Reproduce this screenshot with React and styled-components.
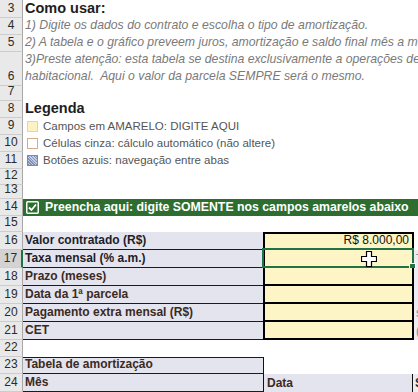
import React from "react";
import styled, { createGlobalStyle, css } from "styled-components";

const Global = createGlobalStyle`
  html, body { margin: 0; padding: 0; background: #fff; overflow: hidden; }
  body { width: 418px; height: 392px; font-family: "Liberation Sans", Arial, sans-serif; }
`;

const Sheet = styled.div`
  display: flex;
  flex-direction: column;
  width: 418px;
  height: 392px;
  overflow: hidden;
`;

const Row = styled.div`
  display: flex;
  height: ${(p) => p.$h}px;
  flex: 0 0 auto;
`;

const RowHead = styled.div`
  box-sizing: border-box;
  width: 23px;
  flex: 0 0 23px;
  display: flex;
  align-items: flex-end;
  justify-content: center;
  padding-bottom: 2px;
  font-size: 12px;
  line-height: 14px;
  color: #2b2b2b;
  background: ${(p) => (p.$active ? "#d3d3d3" : "#e9e9e9")};
  border-bottom: 1px solid #cdcdcd;
  border-right: ${(p) => (p.$active ? "2px solid #217346" : "1px solid #a8a8a8")};
`;

const Body = styled.div`
  flex: 1;
  display: flex;
  min-width: 0;
  position: relative;
  background: ${(p) => p.$bg || "#fff"};
`;

const FreeText = styled.div`
  align-self: flex-end;
  padding: 0 0 ${(p) => p.$pb ?? 1}px 2px;
  white-space: pre;
  ${(p) =>
    p.$kind === "title" &&
    css`
      font-size: 14.5px;
      font-weight: bold;
      color: #1e1e1e;
      line-height: 17px;
    `}
  ${(p) =>
    p.$kind === "note" &&
    css`
      font-size: 12.25px;
      font-style: italic;
      color: #7a7a7a;
      line-height: 17px;
    `}
  ${(p) =>
    p.$kind === "banner" &&
    css`
      font-size: 12.3px;
      font-weight: bold;
      color: #fff;
      line-height: 15px;
      display: flex;
      align-items: center;
      gap: 6px;
      padding-left: 3px;
    `}
`;

const LegendLine = styled.div`
  align-self: flex-end;
  display: flex;
  align-items: center;
  gap: 5px;
  padding: 0 0 2px 4px;
  font-size: 11.5px;
  line-height: 14px;
  color: #555;
  white-space: nowrap;
`;

const Swatch = styled.span`
  box-sizing: border-box;
  width: 11px;
  height: 11px;
  flex: 0 0 11px;
  ${(p) =>
    p.$type === "yellow" &&
    css`
      background: #fdf3c2;
      border: 1px solid #e2d79c;
    `}
  ${(p) =>
    p.$type === "gray" &&
    css`
      background: #fff;
      border: 1px solid #d4ad86;
    `}
  ${(p) =>
    p.$type === "blue" &&
    css`
      background: repeating-linear-gradient(45deg, #7f8fb8 0 1px, #c4cde2 1px 2px);
      border: 1px solid #7a88ad;
    `}
`;

const LabelCell = styled.div`
  box-sizing: border-box;
  width: 240px;
  flex: 0 0 240px;
  display: flex;
  align-items: flex-end;
  padding: 0 0 2px 2px;
  background: #e4e4ee;
  font-size: 12px;
  font-weight: bold;
  line-height: 14px;
  color: ${(p) => (p.$dark ? "#1d1d28" : "#3b2a22")};
  border-bottom: 1px solid #1b1b1b;
  ${(p) => p.$top && "border-top: 1px solid #1b1b1b;"}
  white-space: nowrap;
`;

const InputCell = styled.div`
  box-sizing: border-box;
  width: 151px;
  flex: 0 0 151px;
  position: relative;
  display: flex;
  align-items: flex-end;
  justify-content: flex-end;
  padding: 0 3px 1px 0;
  background: #fdf5c5;
  border-left: 2px solid #000;
  border-right: 2px solid #000;
  border-bottom: 2px solid #000;
  ${(p) => p.$top && "border-top: 2px solid #000;"}
  font-size: 12px;
  line-height: 14px;
  color: #111;
`;

const HeadCell = styled.div`
  box-sizing: border-box;
  width: 150px;
  flex: 0 0 150px;
  display: flex;
  align-items: flex-end;
  padding: 0 0 2px 3px;
  background: #e4e4ee;
  border-left: 1px solid #111;
  border-right: 1px solid #111;
  font-size: 12px;
  font-weight: bold;
  line-height: 14px;
  color: #3b2a22;
`;

const SideCell = styled.div`
  flex: 1;
  display: flex;
  align-items: flex-end;
  padding: 0 0 2px 2px;
  overflow: hidden;
  background: ${(p) => (p.$shade ? "#ececf2" : "#fff")};
  border-left: ${(p) => (p.$ruled ? "1px solid #111" : "none")};
  font-size: 12px;
  line-height: 14px;
  color: ${(p) => (p.$bold ? "#3b2a22" : "#8a8a8a")};
  font-weight: ${(p) => (p.$bold ? "bold" : "normal")};
`;

const Selection = styled.div`
  position: absolute;
  left: -3px;
  top: -2px;
  right: -2px;
  bottom: -2px;
  border: 2px solid #217346;
  pointer-events: none;
`;

const Handle = styled.div`
  position: absolute;
  right: -4px;
  bottom: -4px;
  width: 5px;
  height: 5px;
  background: #217346;
  border: 1px solid #fff;
`;

const Cursor = styled.svg`
  position: absolute;
  left: 96px;
  top: 1px;
`;

const Check = () => (
  <svg width="13" height="13" viewBox="0 0 13 13">
    <rect x="0.75" y="0.75" width="11.5" height="11.5" rx="1" fill="none" stroke="#fff" strokeWidth="1.5" />
    <path d="M3 6.5 L5.5 9 L10 3.5" fill="none" stroke="#fff" strokeWidth="1.8" />
  </svg>
);

export default function App() {
  return (
    <>
      <Global />
      <Sheet>
        <Row $h={18}>
          <RowHead>3</RowHead>
          <Body>
            <FreeText $kind="title">Como usar:</FreeText>
          </Body>
        </Row>
        <Row $h={17}>
          <RowHead>4</RowHead>
          <Body>
            <FreeText $kind="note">1) Digite os dados do contrato e escolha o tipo de amortização.</FreeText>
          </Body>
        </Row>
        <Row $h={17}>
          <RowHead>5</RowHead>
          <Body>
            <FreeText $kind="note">2) A tabela e o gráfico preveem juros, amortização e saldo final mês a mês.</FreeText>
          </Body>
        </Row>
        <Row $h={34}>
          <RowHead>6</RowHead>
          <Body>
            <FreeText $kind="note">
              {"3)Preste atenção: esta tabela se destina exclusivamente a operações de\nhabitacional.  Aqui o valor da parcela SEMPRE será o mesmo."}
            </FreeText>
          </Body>
        </Row>
        <Row $h={15}>
          <RowHead>7</RowHead>
          <Body />
        </Row>
        <Row $h={17}>
          <RowHead>8</RowHead>
          <Body>
            <FreeText $kind="title">Legenda</FreeText>
          </Body>
        </Row>
        <Row $h={17}>
          <RowHead>9</RowHead>
          <Body>
            <LegendLine>
              <Swatch $type="yellow" />
              Campos em AMARELO: DIGITE AQUI
            </LegendLine>
          </Body>
        </Row>
        <Row $h={17}>
          <RowHead>10</RowHead>
          <Body>
            <LegendLine>
              <Swatch $type="gray" />
              Células cinza: cálculo automático (não altere)
            </LegendLine>
          </Body>
        </Row>
        <Row $h={17}>
          <RowHead>11</RowHead>
          <Body>
            <LegendLine>
              <Swatch $type="blue" />
              Botões azuis: navegação entre abas
            </LegendLine>
          </Body>
        </Row>
        <Row $h={16}>
          <RowHead>12</RowHead>
          <Body />
        </Row>
        <Row $h={14}>
          <RowHead>13</RowHead>
          <Body />
        </Row>
        <Row $h={17}>
          <RowHead>14</RowHead>
          <Body $bg="#2d6e30">
            <FreeText $kind="banner" $pb={1}>
              <Check />
              Preencha aqui: digite SOMENTE nos campos amarelos abaixo
            </FreeText>
          </Body>
        </Row>
        <Row $h={16}>
          <RowHead>15</RowHead>
          <Body />
        </Row>
        <Row $h={18}>
          <RowHead>16</RowHead>
          <Body>
            <LabelCell $dark>Valor contratado (R$)</LabelCell>
            <InputCell $top>R$ 8.000,00</InputCell>
            <SideCell />
          </Body>
        </Row>
        <Row $h={18}>
          <RowHead $active>17</RowHead>
          <Body>
            <LabelCell $dark>Taxa mensal (% a.m.)</LabelCell>
            <InputCell>
              <Selection>
                <Handle />
              </Selection>
              <Cursor width="16" height="16" viewBox="0 0 16 16">
                <path
                  d="M5.5 0.5 H10.5 V5.5 H15.5 V10.5 H10.5 V15.5 H5.5 V10.5 H0.5 V5.5 H5.5 Z"
                  fill="#fff"
                  stroke="#000"
                  strokeWidth="1.2"
                />
              </Cursor>
            </InputCell>
            <SideCell $shade>T</SideCell>
          </Body>
        </Row>
        <Row $h={18}>
          <RowHead>18</RowHead>
          <Body>
            <LabelCell>Prazo (meses)</LabelCell>
            <InputCell />
            <SideCell $shade />
          </Body>
        </Row>
        <Row $h={18}>
          <RowHead>19</RowHead>
          <Body>
            <LabelCell>Data da 1ª parcela</LabelCell>
            <InputCell />
            <SideCell $shade />
          </Body>
        </Row>
        <Row $h={18}>
          <RowHead>20</RowHead>
          <Body>
            <LabelCell>Pagamento extra mensal (R$)</LabelCell>
            <InputCell />
            <SideCell $shade>s</SideCell>
          </Body>
        </Row>
        <Row $h={18}>
          <RowHead>21</RowHead>
          <Body>
            <LabelCell>CET</LabelCell>
            <InputCell />
            <SideCell $shade>(</SideCell>
          </Body>
        </Row>
        <Row $h={17}>
          <RowHead>22</RowHead>
          <Body />
        </Row>
        <Row $h={17}>
          <RowHead>23</RowHead>
          <Body>
            <LabelCell $top>Tabela de amortização</LabelCell>
            <SideCell $ruled />
          </Body>
        </Row>
        <Row $h={18}>
          <RowHead>24</RowHead>
          <Body>
            <LabelCell>Mês</LabelCell>
            <HeadCell>Data</HeadCell>
            <SideCell $shade $bold>S</SideCell>
          </Body>
        </Row>
      </Sheet>
    </>
  );
}
